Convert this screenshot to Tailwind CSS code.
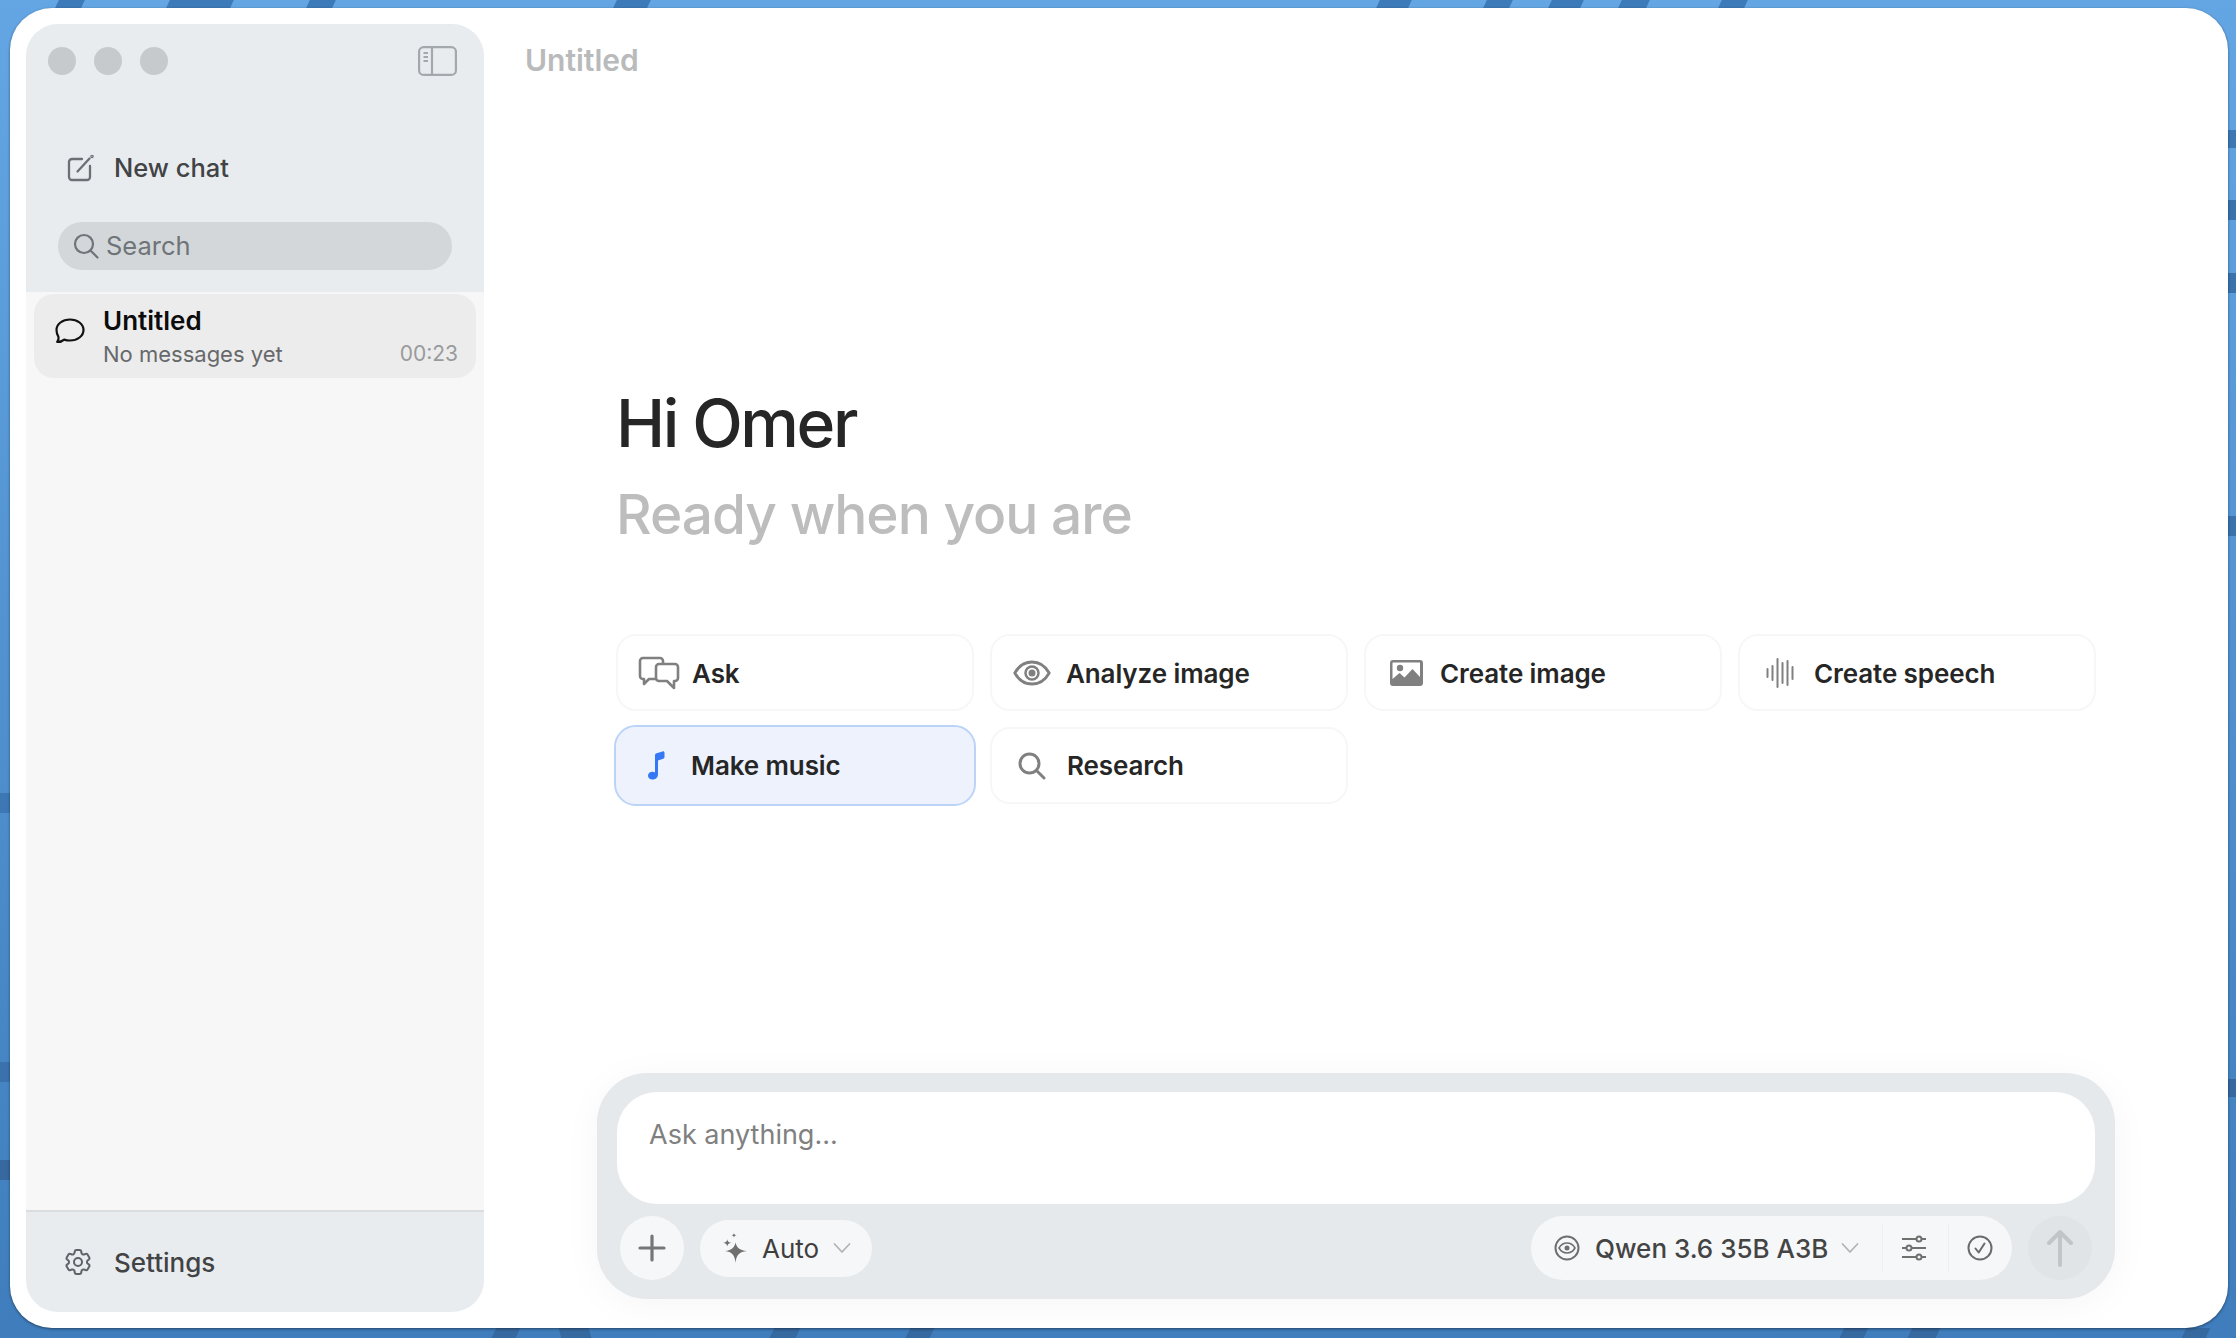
<!DOCTYPE html>
<html lang="en">
<head>
  <meta charset="UTF-8" />
  <title>Chat</title>
  <script src="https://cdn.jsdelivr.net/npm/@tailwindcss/browser@4"></script>
</head>
<body class="relative h-[1338px] w-[2236px] overflow-hidden bg-linear-to-b from-[#64a6e4] to-[#3f7dbc] [font-family:Inter,sans-serif]">
  <!-- wallpaper bits that show round the window -->
  <div class="absolute left-[57px] top-0 h-[8px] w-[26px] -skew-x-[25deg] bg-[#3d7ab9]"></div>
  <div class="absolute left-[168px] top-0 h-[8px] w-[64px] -skew-x-[25deg] bg-[#3d7ab9]"></div>
  <div class="absolute left-[308px] top-0 h-[8px] w-[26px] -skew-x-[25deg] bg-[#3d7ab9]"></div>
  <div class="absolute left-[615px] top-0 h-[8px] w-[34px] -skew-x-[25deg] bg-[#3d7ab9]"></div>
  <div class="absolute left-[1378px] top-0 h-[8px] w-[32px] -skew-x-[25deg] bg-[#3d7ab9]"></div>
  <div class="absolute left-[1485px] top-0 h-[8px] w-[26px] -skew-x-[25deg] bg-[#3d7ab9]"></div>
  <div class="absolute left-[1550px] top-0 h-[8px] w-[32px] -skew-x-[25deg] bg-[#3d7ab9]"></div>
  <div class="absolute left-[1620px] top-0 h-[8px] w-[28px] -skew-x-[25deg] bg-[#3d7ab9]"></div>
  <div class="absolute left-[1720px] top-0 h-[8px] w-[26px] -skew-x-[25deg] bg-[#3d7ab9]"></div>
  <div class="absolute left-[494px] bottom-0 h-[10px] w-[24px] -skew-x-[25deg] bg-[#36699f]"></div>
  <div class="absolute left-[560px] bottom-0 h-[10px] w-[30px] skew-x-[15deg] bg-[#36699f]"></div>
  <div class="absolute left-[772px] bottom-0 h-[10px] w-[26px] -skew-x-[25deg] bg-[#36699f]"></div>
  <div class="absolute left-[908px] bottom-0 h-[10px] w-[24px] -skew-x-[25deg] bg-[#36699f]"></div>
  <div class="absolute left-[1842px] bottom-0 h-[10px] w-[24px] -skew-x-[25deg] bg-[#36699f]"></div>
  <div class="absolute left-[1910px] bottom-0 h-[10px] w-[28px] -skew-x-[25deg] bg-[#36699f]"></div>
  <div class="absolute left-[2184px] bottom-0 h-[10px] w-[24px] -skew-x-[25deg] bg-[#36699f]"></div>
  <div class="absolute right-0 top-[130px] h-[18px] w-[8px] bg-[#3d78b5]"></div>
  <div class="absolute right-0 top-[200px] h-[20px] w-[8px] bg-[#3a72ad]"></div>
  <div class="absolute right-0 top-[273px] h-[20px] w-[8px] bg-[#3a72ad]"></div>
  <div class="absolute right-0 top-[516px] h-[20px] w-[8px] bg-[#3a72ad]"></div>
  <div class="absolute right-0 top-[1079px] h-[18px] w-[8px] bg-[#36699f]"></div>
  <div class="absolute left-0 top-[793px] h-[20px] w-[10px] bg-[#3d78b5]"></div>
  <div class="absolute left-0 top-[1062px] h-[20px] w-[10px] bg-[#3a72ad]"></div>
  <div class="absolute left-0 top-[1160px] h-[20px] w-[10px] bg-[#36699f]"></div>

  <div class="relative pl-[10px] pt-[8px]">
    <div class="flex h-[1320px] w-[2218px] rounded-[42px] bg-white shadow-[0_1px_3px_rgba(0,0,0,0.45)]">

      <!-- Sidebar -->
      <aside class="m-4 flex w-[458px] flex-col overflow-hidden rounded-[32px] bg-[#f7f7f7]">
        <div class="h-[268px] shrink-0 bg-[#e9ecef] pl-[22px] pr-[27px] pt-[22px]">
          <div class="flex items-center">
            <span class="h-7 w-7 rounded-full bg-[#c6cacd]"></span>
            <span class="ml-[18px] h-7 w-7 rounded-full bg-[#c6cacd]"></span>
            <span class="ml-[18px] h-7 w-7 rounded-full bg-[#c6cacd]"></span>
            <svg class="ml-auto h-[30px] w-[39px] text-[#a3a8ac]" viewBox="0 0 39 30" fill="none" stroke="currentColor" stroke-width="2.2">
              <rect x="1.1" y="1.1" width="36.8" height="27.8" rx="4.5"/>
              <path d="M14 1v28"/>
              <path d="M5.5 7h4.500M5.500 11h4.500M5.500 15h4.500" stroke-width="1.800"/>
            </svg>
          </div>
          <div class="mt-[73px] flex h-[38px] items-center pl-[19px]">
            <svg class="h-[27px] w-[27px] text-[#6b7075]" viewBox="0 0 27 27" fill="none" stroke="currentColor" stroke-width="2.300" stroke-linecap="round">
              <path d="M15 4H5a3 3 0 0 0-3 3v15a3 3 0 0 0 3 3h15a3 3 0 0 0 3-3V11"/>
              <path d="M10.500 16.500 22.500 3.500"/>
              <circle cx="25" cy="1.500" r="0.600"/>
            </svg>
            <span class="ml-[20px] text-[25.500px] font-medium text-[#414345]">New chat</span>
          </div>
          <div class="ml-[10px] mt-[35px] flex h-12 w-[394px] items-center rounded-full bg-[#d3d7da] pl-[15px]">
            <svg class="h-[26px] w-[26px] text-[#6f7478]" viewBox="0 0 26 26" fill="none" stroke="currentColor" stroke-width="2.200" stroke-linecap="round">
              <circle cx="11" cy="11" r="9"/>
              <path d="m17.500 17.500 7 7"/>
            </svg>
            <span class="ml-[7px] text-[25.500px] text-[#6f7478]">Search</span>
          </div>
        </div>

        <div class="flex-1 px-2 pt-[2px]">
          <div class="flex h-[84px] rounded-[20px] bg-[#ececec] pl-[21px] pr-[18px]">
            <svg class="mt-[24px] h-[26px] w-[30px] shrink-0 text-[#111]" viewBox="0 0 30 26" fill="none" stroke="currentColor" stroke-width="2.200" stroke-linejoin="round">
              <path d="M15 1.500c7.500 0 13.500 4.500 13.500 10.500S22.500 22.500 15 22.500c-2 0-4-.3-5.800-.9-1.500 1.400-4 2.400-7 2.400 1-1.200 1.600-3.200 1.300-5C2.300 17 1.500 14.700 1.500 12 1.500 6 7.500 1.500 15 1.500Z"/>
            </svg>
            <div class="ml-[18px] flex-1">
              <div class="mt-[10px] text-[26px] font-semibold leading-[34px] text-[#0c0c0c]">Untitled</div>
              <div class="mt-[2px] flex items-center justify-between">
                <span class="text-[22px] leading-[28px] text-[#66686a]">No messages yet</span>
                <span class="text-[21px] leading-[28px] text-[#999b9d]">00:23</span>
              </div>
            </div>
          </div>
        </div>

        <div class="flex h-[102px] shrink-0 items-center border-t-2 border-[#d9dde0] bg-[#e9ecef] pl-[36px]">
          <svg class="h-8 w-8 text-[#5f6367]" viewBox="0 0 24 24" fill="none" stroke="currentColor" stroke-width="1.500" stroke-linecap="round" stroke-linejoin="round">
            <path d="M9.594 3.940c.09-.542.560-.940 1.110-.940h2.593c.550 0 1.020.398 1.110.940l.213 1.281c.063.374.313.686.645.870.074.040.147.083.220.127.325.196.720.257 1.075.124l1.217-.456a1.125 1.125 0 0 1 1.370.490l1.296 2.247a1.125 1.125 0 0 1-.260 1.431l-1.003.827c-.293.241-.438.613-.430.992a7.700 7.700 0 0 1 0 .255c-.008.378.137.750.430.991l1.004.827c.424.350.534.955.260 1.430l-1.298 2.247a1.125 1.125 0 0 1-1.369.491l-1.217-.456c-.355-.133-.750-.072-1.076.124a6.500 6.500 0 0 1-.220.128c-.331.183-.581.495-.644.869l-.213 1.281c-.090.543-.560.940-1.110.940h-2.594c-.550 0-1.019-.398-1.110-.940l-.213-1.281c-.062-.374-.312-.686-.644-.870a6.500 6.500 0 0 1-.220-.127c-.325-.196-.720-.257-1.076-.124l-1.217.456a1.125 1.125 0 0 1-1.369-.490l-1.297-2.247a1.125 1.125 0 0 1 .260-1.431l1.004-.827c.292-.240.437-.613.430-.991a6.900 6.900 0 0 1 0-.255c.007-.380-.138-.751-.430-.992l-1.004-.827a1.125 1.125 0 0 1-.260-1.430l1.297-2.247a1.125 1.125 0 0 1 1.370-.491l1.216.456c.356.133.751.072 1.076-.124.072-.044.146-.086.220-.128.332-.183.582-.495.644-.869l.214-1.280Z"/>
            <circle cx="12" cy="12" r="3"/>
          </svg>
          <span class="ml-[20px] text-[26px] font-medium text-[#414345]">Settings</span>
        </div>
      </aside>

      <!-- Main -->
      <main class="flex flex-1 flex-col pb-[29px] pt-[34px]">
        <h2 class="ml-[25px] h-9 text-[30px] font-semibold leading-9 text-[#b8babb]">Untitled</h2>

        <div class="ml-[116px] mt-[305px]">
          <h1 class="text-[66px] font-medium leading-[80px] tracking-[-2.400px] text-[#262626]">Hi Omer</h1>
          <p class="mt-[16px] text-[55px] font-medium leading-[70px] tracking-[-1px] text-[#bdbdbd]">Ready when you are</p>

          <div class="mt-[85px] grid w-[1480px] grid-cols-4 gap-4">
            <div class="flex h-[77px] items-center rounded-[20px] border-2 border-[#f7f7f7] pl-[20px] pt-[1px] text-[26px] font-semibold tracking-[-0.100px] text-[#262626]">
              <svg class="h-[34px] w-[42px] shrink-0 text-[#808080]" viewBox="0 0 42 34" fill="none" stroke="currentColor" stroke-width="2.600" stroke-linejoin="round">
                <path d="M18 23H11l-5 5v-5H5a3 3 0 0 1-3-3V5a3 3 0 0 1 3-3h17a3 3 0 0 1 3 3v3"/>
                <path d="M21 8h16a3 3 0 0 1 3 3v11a3 3 0 0 1-3 3h-1v7l-7-7h-8a3 3 0 0 1-3-3V11a3 3 0 0 1 3-3Z"/>
              </svg>
              <span class="ml-[12px]">Ask</span>
            </div>
            <div class="flex h-[77px] items-center rounded-[20px] border-2 border-[#f7f7f7] pl-[21px] pt-[1px] text-[26px] font-semibold tracking-[-0.100px] text-[#262626]">
              <svg class="h-[26px] w-[38px] shrink-0 text-[#808080]" viewBox="0 0 38 26" fill="none">
                <path d="M1.800 13C6 5.500 12 2 19 2s13 3.500 17.200 11C32 20.500 26 24 19 24S6 20.500 1.800 13Z" stroke="currentColor" stroke-width="2.800"/>
                <circle cx="19" cy="13" r="6.500" stroke="currentColor" stroke-width="2.500"/>
                <circle cx="19" cy="13" r="3.500" fill="currentColor"/>
              </svg>
              <span class="ml-[15px]">Analyze image</span>
            </div>
            <div class="flex h-[77px] items-center rounded-[20px] border-2 border-[#f7f7f7] pl-[24px] pt-[1px] text-[26px] font-semibold tracking-[-0.100px] text-[#262626]">
              <svg class="h-[26px] w-[33px] shrink-0 text-[#808080]" viewBox="0 0 33 26">
                <path fill-rule="evenodd" fill="currentColor" d="M3 0h27a3 3 0 0 1 3 3v20a3 3 0 0 1-3 3H3a3 3 0 0 1-3-3V3a3 3 0 0 1 3-3Zm0 2.500a.500.500 0 0 0-.500.500v16l7-6 5 4.500 8-8.500 7.500 8V3a.500.500 0 0 0-.500-.500H3Z"/>
                <circle cx="10" cy="8" r="3.200" fill="currentColor"/>
              </svg>
              <span class="ml-[17px]">Create image</span>
            </div>
            <div class="flex h-[77px] items-center rounded-[20px] border-2 border-[#f7f7f7] pl-[26px] pt-[1px] text-[26px] font-semibold tracking-[-0.100px] text-[#262626]">
              <svg class="h-[30px] w-[28px] shrink-0 text-[#808080]" viewBox="0 0 28 30" fill="none" stroke="currentColor" stroke-width="2" stroke-linecap="round">
                <path d="M1.500 11v8M6.500 8v14M11.500 1v28M16.500 5v20M21.500 3v24M26.500 9v12"/>
              </svg>
              <span class="ml-[20px]">Create speech</span>
            </div>
            <div class="flex h-[77px] items-center rounded-[20px] border-2 border-transparent bg-[#edf2fd] pl-[28px] text-[26px] font-semibold tracking-[-0.100px] text-[#262626] outline-2 outline-[#bcd3f8]">
              <svg class="h-[29px] w-[20px] shrink-0 text-[#3478f6]" viewBox="0 0 20 29" fill="currentColor">
                <path d="M9 4.500c0-1.100.600-2 1.600-2.300l6-1.800c1-.300 1.900.400 1.900 1.400v4.300c0 .800-.500 1.500-1.300 1.700L12 9.400V23c0 3.300-2.200 5.500-5.300 5.500C4 28.500 2 27 2 24.800c0-2.400 2.100-4 4.500-4 1 0 1.900.200 2.500.600V4.500Z"/>
              </svg>
              <span class="ml-[25px]">Make music</span>
            </div>
            <div class="flex h-[77px] items-center rounded-[20px] border-2 border-[#f7f7f7] pl-[26px] text-[26px] font-semibold tracking-[-0.100px] text-[#262626]">
              <svg class="h-[28px] w-[28px] shrink-0 text-[#808080]" viewBox="0 0 28 28" fill="none" stroke="currentColor" stroke-width="3" stroke-linecap="round">
                <circle cx="11.500" cy="11.500" r="9.500"/>
                <path d="m18.500 18.500 7.500 7.500"/>
              </svg>
              <span class="ml-[21px]">Research</span>
            </div>
          </div>
        </div>

        <!-- Composer -->
        <div class="ml-[97px] mt-auto h-[226px] w-[1518px] rounded-[50px] bg-[#e5e9ec] px-5 pt-[19px] shadow-[0_6px_40px_rgba(0,0,0,0.04)]">
          <div class="h-[112px] w-[1478px] rounded-[40px] bg-white pl-8 pt-[24px] text-[27px] leading-[38px] text-[#808080]">Ask anything...</div>
          <div class="mt-3 flex w-[1475px] items-center pl-[3px]">
            <div class="flex h-16 w-16 items-center justify-center rounded-full bg-[#f6f7f8]">
              <svg class="h-[28px] w-[28px] text-[#767676]" viewBox="0 0 28 28" fill="none" stroke="currentColor" stroke-width="3.200" stroke-linecap="round">
                <path d="M14 2v24M2 14h24"/>
              </svg>
            </div>
            <div class="ml-4 flex h-[57px] w-[172px] items-center rounded-full bg-[#f6f7f8] pl-[22px]">
              <svg class="h-[30px] w-[25px] text-[#6f6f6f]" viewBox="0 0 24 29" fill="currentColor">
                <path d="M13 9c.700 4.800 3.700 7.800 11 8.500-7.300.700-10.300 3.700-11 11.500-.700-7.800-3.700-10.800-10-11.500C9.300 16.800 12.300 13.800 13 9Z"/>
                <path d="M5 6c.300 2 1.300 3.200 4 3.500-2.700.300-3.700 1.500-4 3.500-.300-2-1.300-3.200-4-3.500C3.700 9.200 4.700 8 5 6ZM11.500 0c.200 1.400.800 2 2.500 2.200-1.700.200-2.300.800-2.500 2.300-.200-1.500-.800-2.100-2.500-2.300C10.700 2 11.300 1.400 11.500 0Z"/>
              </svg>
              <span class="ml-[15px] text-[26px] text-[#3f3f3f]">Auto</span>
              <svg class="ml-[14px] h-[12px] w-[18px] text-[#b4b4b4]" viewBox="0 0 18 12" fill="none" stroke="currentColor" stroke-width="1.800" stroke-linecap="round" stroke-linejoin="round">
                <path d="m1.500 2 7.500 8 7.500-8"/>
              </svg>
            </div>

            <div class="ml-auto flex h-16 w-[481px] items-center rounded-full bg-[#f6f7f8] pl-[23px]">
              <svg class="h-[26px] w-[26px] shrink-0 text-[#6f6f6f]" viewBox="0 0 26 26" fill="none" stroke="currentColor">
                <circle cx="13" cy="13" r="11.500" stroke-width="2"/>
                <path d="M5 13c2-3.500 4.700-5 8-5s6 1.500 8 5c-2 3.500-4.700 5-8 5s-6-1.500-8-5Z" stroke-width="1.600"/>
                <circle cx="13" cy="13" r="2.500" fill="currentColor" stroke="none"/>
              </svg>
              <span class="ml-[15px] whitespace-nowrap text-[26px] font-medium text-[#444]">Qwen 3.6 35B A3B</span>
              <svg class="ml-[13px] h-[12px] w-[18px] shrink-0 text-[#b4b4b4]" viewBox="0 0 18 12" fill="none" stroke="currentColor" stroke-width="1.800" stroke-linecap="round" stroke-linejoin="round">
                <path d="m1.500 2 7.500 8 7.500-8"/>
              </svg>
              <span class="ml-[23px] h-[50px] w-px shrink-0 bg-[#eeeff0]"></span>
              <svg class="ml-[18px] h-[26px] w-[26px] shrink-0 text-[#707070]" viewBox="0 0 26 26" fill="none" stroke="currentColor" stroke-width="2">
                <path d="M1 4h14M21 4h4M1 13h4M11 13h14M1 22h14M21 22h4"/>
                <circle cx="18" cy="4" r="2.500"/><circle cx="8" cy="13" r="2.500"/><circle cx="18" cy="22" r="2.500"/>
              </svg>
              <span class="ml-[21px] h-[50px] w-px shrink-0 bg-[#eeeff0]"></span>
              <svg class="ml-[18px] h-[26px] w-[26px] shrink-0 text-[#6a6a6a]" viewBox="0 0 26 26" fill="none" stroke="currentColor" stroke-width="2" stroke-linecap="round" stroke-linejoin="round">
                <circle cx="13" cy="13" r="11.500"/>
                <path d="m8.500 13.500 3.200 4 5.800-9"/>
              </svg>
            </div>
            <div class="ml-4 flex h-16 w-16 items-center justify-center rounded-full bg-[#e0e4e7]">
              <svg class="h-[38px] w-[26px] text-[#c2c5c8]" viewBox="0 0 26 38" fill="none" stroke="currentColor" stroke-width="4" stroke-linecap="round" stroke-linejoin="round">
                <path d="M13 36V3M2 14 13 3l11 11"/>
              </svg>
            </div>
          </div>
        </div>
      </main>
    </div>
  </div>
</body>
</html>
